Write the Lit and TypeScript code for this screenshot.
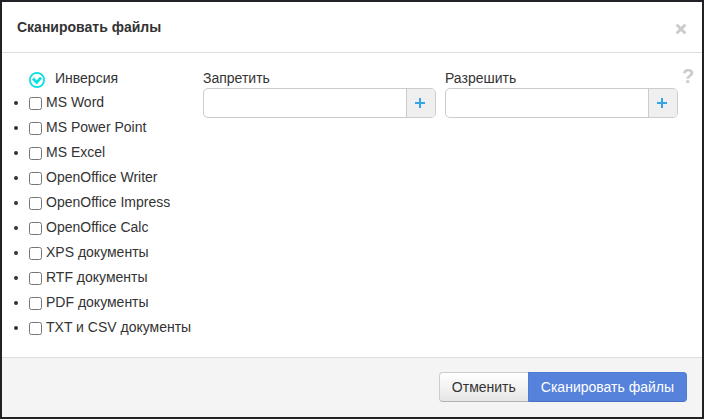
import { LitElement, html, css } from "lit";
import { customElement, property, state } from "lit/decorators.js";

@customElement("pattern-field")
class PatternField extends LitElement {
  @property() label = "";

  static styles = css`
    :host {
      display: block;
      min-width: 0;
    }
    .label {
      display: block;
      line-height: 20px;
    }
    .group {
      display: flex;
      height: 30px;
      box-sizing: border-box;
      border: 1px solid #ccc;
      border-radius: 5px;
      overflow: hidden;
      background: #fff;
    }
    .input {
      flex: 1;
      min-width: 0;
      border: 0;
      outline: 0;
      padding: 0 8px;
      font: inherit;
      color: #555;
      background: transparent;
    }
    .add {
      display: flex;
      align-items: center;
      justify-content: center;
      width: 29px;
      padding: 0;
      border: 0;
      border-left: 1px solid #ccc;
      background: #efefef;
      cursor: pointer;
    }
  `;

  render() {
    return html`
      <label class="label" for="value">${this.label}</label>
      <div class="group">
        <input class="input" id="value" type="text" />
        <button class="add" type="button" aria-label="Добавить">
          <svg width="12" height="12" viewBox="0 0 12 12">
            <path d="M5 1V11M0 6H10" stroke="#33a5e2" stroke-width="2" />
          </svg>
        </button>
      </div>
    `;
  }
}

@customElement("app-root")
class AppRoot extends LitElement {
  @state() private types = [
    "MS Word",
    "MS Power Point",
    "MS Excel",
    "OpenOffice Writer",
    "OpenOffice Impress",
    "OpenOffice Calc",
    "XPS документы",
    "RTF документы",
    "PDF документы",
    "TXT и CSV документы",
  ];

  static styles = css`
    :host {
      display: block;
      font: 14px/20px "Liberation Sans", Arial, sans-serif;
      color: #333;
    }
    .dialog {
      display: flex;
      flex-direction: column;
      min-height: 100vh;
      box-sizing: border-box;
      border: 2px solid #212226;
      background: #fff;
    }
    .header {
      display: flex;
      align-items: center;
      justify-content: space-between;
      height: 50px;
      padding: 0 15px;
      border-bottom: 1px solid #ddd;
    }
    .title {
      margin: 0;
      font-size: 14px;
      line-height: 20px;
    }
    .close {
      display: flex;
      padding: 0;
      margin-top: 4px;
      border: 0;
      background: none;
      cursor: pointer;
    }
    .body {
      flex: 1;
      display: flex;
      align-items: flex-start;
      gap: 4px;
      padding: 15px 8px 17px 27px;
    }
    .columns {
      flex: 1;
      display: grid;
      grid-template-columns: 165px 1fr 1fr;
      column-gap: 9px;
      align-items: start;
    }
    .help {
      width: 12px;
      color: #ccc;
      font-size: 20px;
      line-height: 16px;
      font-weight: bold;
      text-align: center;
      text-decoration: none;
    }
    .invert {
      display: flex;
      align-items: center;
      gap: 10px;
      padding: 0;
      border: 0;
      font: inherit;
      color: inherit;
      background: none;
      cursor: pointer;
    }
    .list {
      margin: 2px 0 0;
      padding: 0;
    }
    .item {
      height: 25px;
      line-height: 25px;
      white-space: nowrap;
    }
    .check {
      width: 13px;
      height: 13px;
      margin: 0 4px 0 0;
      vertical-align: -3px;
    }
    .footer {
      display: flex;
      justify-content: flex-end;
      padding: 14px 15px 15px;
      border-top: 1px solid #ddd;
      background: #f4f4f4;
    }
    .button {
      height: 30px;
      padding: 0 12px;
      border: 1px solid #ccc;
      border-bottom-color: #b3b3b3;
      border-right: 0;
      border-radius: 4px 0 0 4px;
      font: inherit;
      color: #333;
      background: linear-gradient(#fff, #e6e6e6);
      cursor: pointer;
    }
    .button.primary {
      border: 1px solid #4f7dd5;
      border-bottom-color: #4570c4;
      border-radius: 0 4px 4px 0;
      color: #fff;
      background: #5682db;
    }
  `;

  render() {
    return html`
      <main class="dialog">
        <header class="header">
          <h1 class="title">Сканировать файлы</h1>
          <button class="close" type="button" aria-label="Закрыть">
            <svg width="12" height="12" viewBox="0 0 12 12">
              <path d="M2.5 2.5L9.5 9.5M9.5 2.5L2.5 9.5" stroke="#ccc" stroke-width="3" stroke-linecap="round" />
            </svg>
          </button>
        </header>
        <section class="body">
          <div class="columns">
            <div>
              <button class="invert" type="button">
                <svg width="16" height="20" viewBox="0 0 16 20" fill="none">
                  <circle cx="8" cy="12" r="7.1" stroke="#0cdfe0" stroke-width="1.8" />
                  <path d="M4 10.6L7.7 14.4L12 9.6" stroke="#0cdfe0" stroke-width="2.8" />
                </svg>
                Инверсия
              </button>
              <ul class="list">
                ${this.types.map(
                  (name) => html`<li class="item"><label><input class="check" type="checkbox" />${name}</label></li>`
                )}
              </ul>
            </div>
            <pattern-field label="Запретить"></pattern-field>
            <pattern-field label="Разрешить"></pattern-field>
          </div>
          <a class="help" href="#" aria-label="Справка">?</a>
        </section>
        <footer class="footer">
          <button class="button" type="button">Отменить</button>
          <button class="button primary" type="button">Сканировать файлы</button>
        </footer>
      </main>
    `;
  }
}
